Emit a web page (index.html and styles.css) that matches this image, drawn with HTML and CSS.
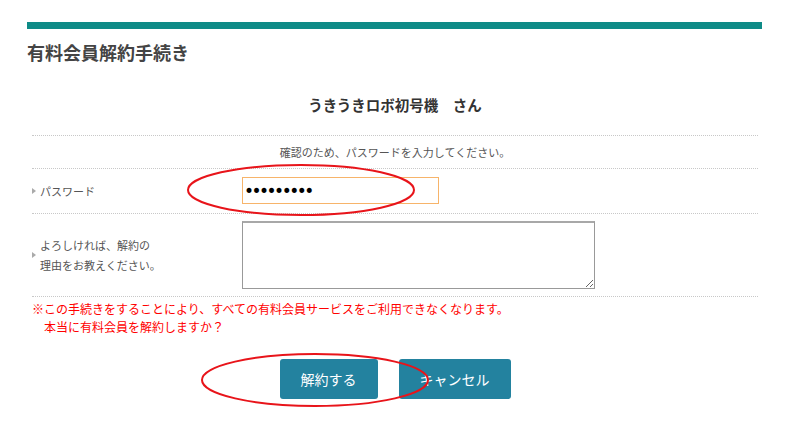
FILE: index.html
```
<!DOCTYPE html>
<html lang="ja">
<head>
  <meta charset="UTF-8">
  <meta name="viewport" content="width=device-width, initial-scale=1.0">
  <title>有料会員解約手続き</title>
  <link rel="stylesheet" href="styles.css">
</head>
<body>
  <div class="page">
    <div class="topbar"></div>
    <h1 class="title">有料会員解約手続き</h1>

    <form class="cancel-form">
      <p class="member">うきうきロボ初号機　さん</p>

      <div class="rows">
        <div class="row note">確認のため、パスワードを入力してください。</div>
        <div class="row field pw-row">
          <label class="label" for="password">パスワード</label>
          <input class="pw" type="password" id="password" value="123456789">
        </div>
        <div class="row field reason-row">
          <label class="label" for="reason">よろしければ、解約の<br>理由をお教えください。</label>
          <textarea class="reason" id="reason"></textarea>
        </div>
      </div>

      <p class="warning">※この手続きをすることにより、すべての有料会員サービスをご利用できなくなります。<br>　本当に有料会員を解約しますか？</p>

      <div class="buttons">
        <button type="submit" class="btn">解約する</button>
        <button type="button" class="btn">キャンセル</button>
      </div>
    </form>

    <!-- hand drawn marks -->
    <svg class="marks" width="800" height="427" viewBox="0 0 800 427">
      <ellipse cx="301" cy="190" rx="113" ry="25" />
      <ellipse cx="315" cy="380" rx="113" ry="26" />
    </svg>
  </div>
</body>
</html>
```

FILE: styles.css
```
body {
  margin: 0;
  background: #fff;
  font-family: "Noto Sans CJK JP", "Noto Sans", sans-serif;
  color: #444;
}

.page {
  position: relative;
  width: 735px;
  min-height: 405px;
  padding: 22px 0 0 27px;
}

.topbar {
  height: 7px;
  background-color: #0e8b87;
}

.title {
  margin: 11px 0 0;
  font-size: 18px;
  line-height: 24px;
  font-weight: bold;
  color: #444;
}

.cancel-form {
  padding: 0 4px 0 5px;
}

.member {
  margin: 31px 0 0;
  text-align: center;
  font-size: 14.5px;
  line-height: 20px;
  font-weight: bold;
  color: #333;
}

.rows {
  margin-top: 20px;
  border-bottom: 1px dotted #c8c8c8;
}

.row {
  border-top: 1px dotted #c8c8c8;
  font-size: 11px;
  color: #555;
}

.note {
  height: 32px;
  line-height: 32px;
  text-align: center;
}

.field {
  display: flex;
  align-items: center;
}

.pw-row {
  padding: 8px 0 9px;
}

.reason-row {
  padding: 7px 0 7px;
}

.label {
  position: relative;
  width: 202px;
  padding-left: 8px;
  line-height: 20px;
}

.label::before {
  content: "";
  position: absolute;
  left: 0;
  top: 50%;
  margin-top: -3px;
  border-left: 4px solid #aaa;
  border-top: 3px solid transparent;
  border-bottom: 3px solid transparent;
}

.pw {
  width: 197px;
  height: 27px;
  box-sizing: border-box;
  border: 1px solid #f7b46a;
  padding: 0 1px;
  font-family: "DejaVu Sans", sans-serif;
  font-size: 17px;
  letter-spacing: -2.5px;
  color: #000;
  outline: none;
}

.reason {
  width: 353px;
  height: 68px;
  box-sizing: border-box;
  border: 1px solid #999;
  border-top: 2px solid #a8a8a8;
  margin: 0;
  font-family: inherit;
}

.warning {
  margin: 3px 0 0;
  font-size: 12px;
  line-height: 18px;
  color: #f00;
}

.buttons {
  display: flex;
  justify-content: center;
  gap: 21px;
  margin-top: 23px;
}

.btn {
  height: 40px;
  padding: 0 21px;
  border: none;
  border-radius: 3px;
  background-color: #23829f;
  color: #fff;
  font-family: inherit;
  font-size: 14px;
  cursor: pointer;
}

.marks {
  position: absolute;
  left: 0;
  top: 0;
  pointer-events: none;
}

.marks ellipse {
  fill: none;
  stroke: #e8141a;
  stroke-width: 2;
}
```
